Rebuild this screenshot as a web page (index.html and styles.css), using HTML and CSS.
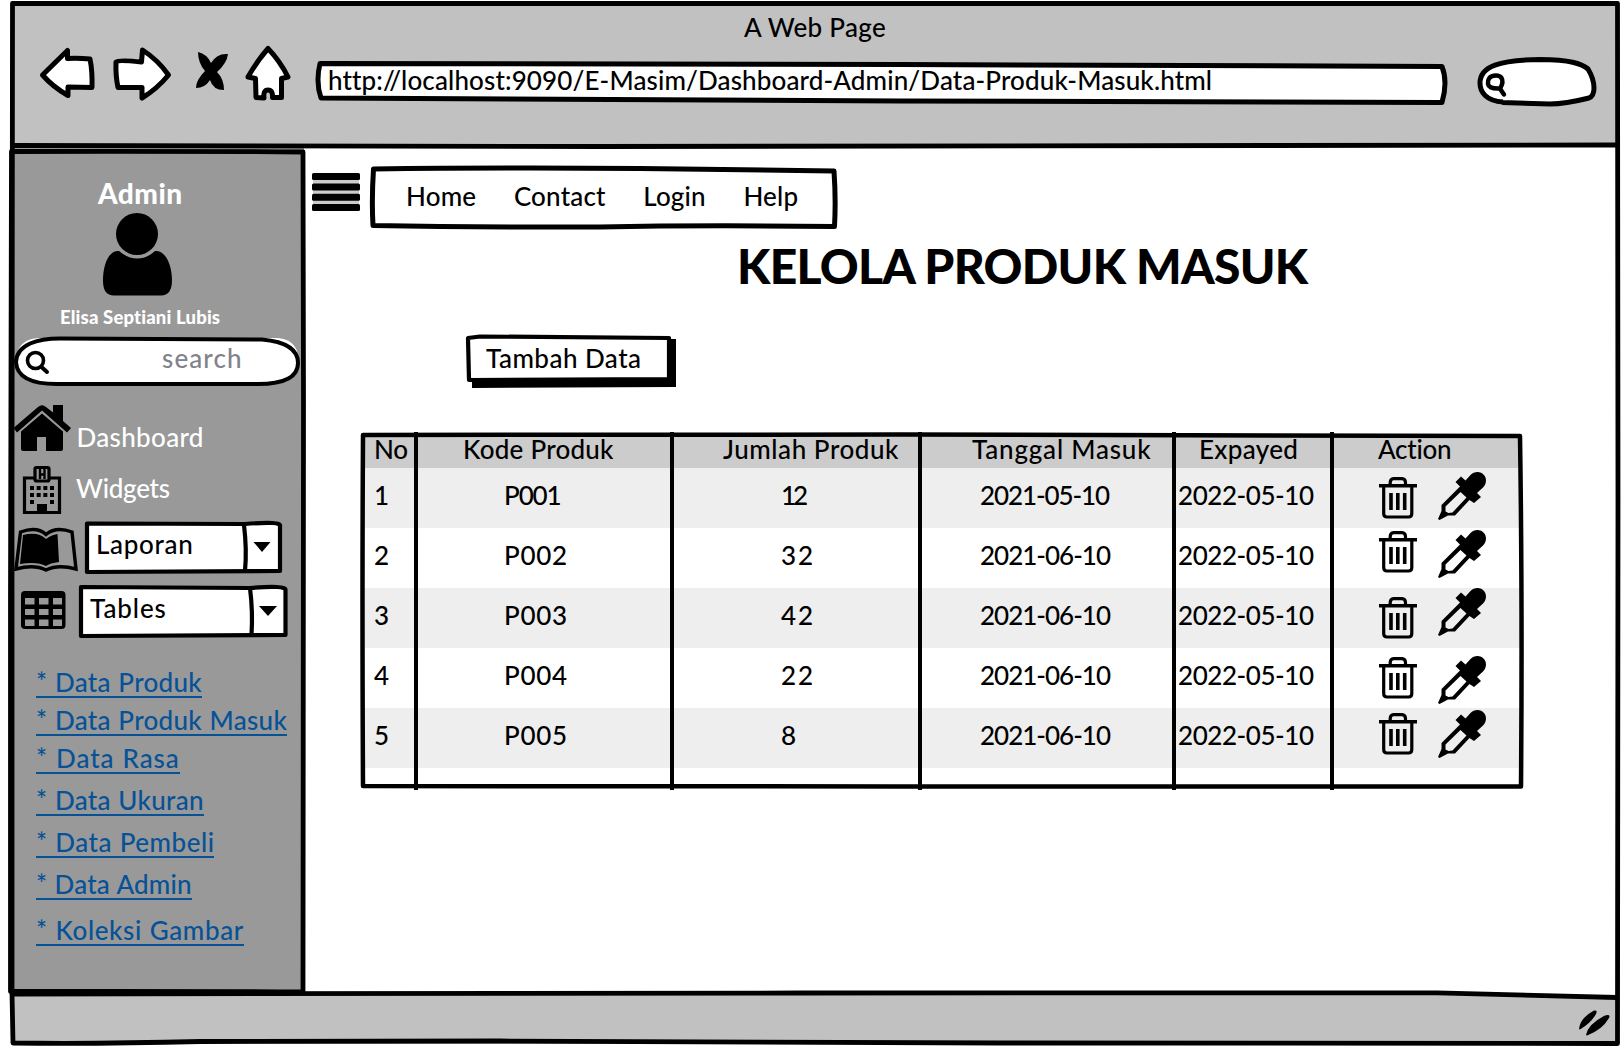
FILE: index.html
```html
<!DOCTYPE html>
<html lang="id">
<head>
<meta charset="utf-8">
<title>A Web Page</title>
<link rel="stylesheet" href="styles.css">
</head>
<body>
<svg class="symbols" aria-hidden="true">
  <symbol id="trash" viewBox="0 0 38 42">
    <path d="M0 8.800H38" stroke="#000" stroke-width="3.400" fill="none"/>
    <path d="M11.200 8V5.500Q11.500 1.800 14.500 1.700H23Q26.300 1.800 26.500 5.500V8" stroke="#000" stroke-width="3.200" fill="none"/>
    <path d="M4.700 9V36.500Q4.700 40 8 40H29.500Q32.800 40 32.800 36.500V9" stroke="#000" stroke-width="3.200" fill="none"/>
    <path d="M12 16V33M18.800 16V33M25.700 16V33" stroke="#000" stroke-width="3.600" fill="none"/>
  </symbol>
  <symbol id="dropper" viewBox="0 0 48 48">
    <path fill-rule="evenodd" d="M0 47L3.500 39V33L22 14.500L17.500 10L23 4.500L27.500 8.500L32.500 3C36-1 43-1 46 3C49 6.500 48.500 12 45 15.500L39 21L43 25L36 31L31.500 28L17 43.500H10L1.500 48ZM7.500 34.500V39.500L10.500 41L14.500 40.500L28.500 25.500L22.500 20Z"/>
  </symbol>
</svg>
<div class="window">
  <header class="chrome">
    <div class="title">A Web Page</div>
    <div class="toolbar">
      <svg class="tools" width="260" height="64" viewBox="36 40 260 64">
        <g fill="#fff" stroke="#000" stroke-width="5" stroke-linejoin="round">
          <path d="M42.500 75L67.500 50.500V58.500Q79 58 90 59Q92.500 71 92 87.500L68 87V95.500Q53 87 42.500 75Z"/>
          <path d="M116 62Q118 59.500 141.500 62L142.500 50Q158 60 168.500 75Q157 89 142 98V87.500L118 87.500Q115.500 76 116 62Z"/>
          <path d="M268 48.500Q280 61 288 77L281.500 78.500L281.500 97.500H272.500Q273 90 268 90Q263 90 264 98L256 97.500L255.500 78.500L248 77Q257 61 268 48.500Z"/>
        </g>
        <path d="M198 52Q207 54 211 63Q217 53 228 54Q227 63 217 72Q224 79 224 90Q213 90 210 80Q205 88 196 88Q196 80 205 71Q198 63 198 52Z"/>
      </svg>
      <div class="address">
        <svg class="outline" width="1136" height="48" viewBox="314 59 1136 48"><path class="box" d="M320 63.500L900 64.500L1442 66.500Q1448 82 1442 102.500L900 101L321 98Q315.500 82 320 63.500Z"/></svg>
        <span>http://localhost:9090/E-Masim/Dashboard-Admin/Data-Produk-Masuk.html</span>
      </div>
      <svg class="find" width="122" height="54" viewBox="1476 56 122 54">
        <path class="box" d="M1503 102C1486 101 1480 92 1480 83C1480 66 1500 60 1540 59.500C1570 60 1581 63 1588 69Q1594 79 1594 88Q1594 96 1589 98Q1565 104 1550 104L1502 102.500"/>
        <path d="M1496 75.500C1489 75.500 1487.500 80 1488 84Q1489 89 1500 88.500Q1504 82 1501.500 78Q1500 75.500 1496 75.500ZM1499.500 88L1504 94.500" fill="none" stroke="#000" stroke-width="4.500" stroke-linecap="round"/>
      </svg>
    </div>
  </header>

  <div class="body">
    <aside class="sidebar">
      <div class="role">Admin</div>
      <svg class="person" width="70" height="84" viewBox="102 212 70 84"><circle cx="137" cy="234" r="21"/><path d="M119 251Q128 258.500 137 258.500Q147 258.500 155 251C166 250 172 266 172 280Q172 295.500 161 295.500H114Q103 295.500 103 281C103 264 109 250 119 251Z"/></svg>
      <div class="user">Elisa Septiani Lubis</div>
      <div class="search">
        <svg class="outline" width="290" height="54" viewBox="12 334 290 54">
          <path fill="#fff" d="M18 350Q24 338 40 338H275Q294 338 298 354V370H18Z"/>
          <path d="M16 362C17 344 38 338.500 60 338.500L262 339.500C290 342 298 352 298 363C298 378 283 384 258 384L60 384C36 384.500 17 380 16 362Z" fill="#fff" stroke="#000" stroke-width="4"/>
          <circle cx="35.500" cy="360.500" r="8" fill="none" stroke="#000" stroke-width="3.600"/><path d="M41.500 367L47 372" stroke="#000" stroke-width="4" stroke-linecap="round"/>
        </svg>
        <span>search</span>
      </div>
      <nav class="menu">
        <div class="item dash">
          <svg width="58" height="48" viewBox="13 404 58 48"><path d="M13.500 428L38 407Q42 403.500 46 407L53 412.500V405H63V421L71 428L67 432.500L42 410.500L17 432.500Z"/><path d="M42 413.500L63 431.500V449Q63 451 61 451H46V437H37V451H23Q21 451 21 449V431.500Z"/></svg>
          <span>Dashboard</span>
        </div>
        <div class="item widg">
          <svg width="40" height="50" viewBox="22 465 40 50"><path d="M34 478H24.500V512.500H59.500V478H50" fill="none" stroke="#000" stroke-width="3.200"/><rect x="35" y="467.500" width="14" height="13.500" rx="1.500" fill="#999" stroke="#000" stroke-width="3.200"/><path d="M40 469V479M44.500 469V479M40 474.500H45" stroke="#000" stroke-width="2.400"/><path d="M30 488H54M30 495H54" stroke="#000" stroke-width="4" stroke-dasharray="4 2.670"/><path d="M30 502H34M50 502H54" stroke="#000" stroke-width="4"/><path d="M37 504H47V513H37Z"/></svg>
          <span>Widgets</span>
        </div>
        <div class="item lap">
          <svg width="66" height="46" viewBox="13 527 66 46"><path d="M20.500 532Q37 526 46 534.500Q56 526 72 532L76 569Q58 564 46 570Q34 564 16 569Z" fill="none" stroke="#000" stroke-width="3.400"/><path d="M23 535Q38 531 46 539Q51 535 57.500 534L59 562Q50 563 46 566Q37 561 20 564Z"/></svg>
          <div class="select">
            <svg class="outline" width="200" height="56" viewBox="83 519 200 56"><path class="box thin" d="M87 523.500L245 524Q282 521 280 526V571L87 572Z"/><path class="box thin" d="M244 525Q247 550 245 571"/><path d="M253.500 542H270.500L262 552Z"/></svg>
            <span>Laporan</span>
          </div>
        </div>
        <div class="item tab">
          <svg width="46" height="40" viewBox="20 590 46 40"><rect x="21" y="591" width="44.500" height="38" rx="4"/><path fill="#999" d="M25 598H34.500V604.500H25ZM39 598H48.500V604.500H39ZM53 598H62V604.500H53ZM25 609H34.500V615H25ZM39 609H48.500V615H39ZM53 609H62V615H53ZM25 619.500H34.500V626H25ZM39 619.500H48.500V626H39ZM53 619.500H62V626H53Z"/></svg>
          <div class="select">
            <svg class="outline" width="212" height="58" viewBox="77 583 212 58"><path class="box thin" d="M81 587L250 588Q286 585 285.500 590V635L81 636Z"/><path class="box thin" d="M250 588Q253 612 251.500 635"/><path d="M259 606H277L268 616Z"/></svg>
            <span>Tables</span>
          </div>
        </div>
      </nav>
      <ul class="links">
        <li><a>* Data Produk</a></li>
        <li><a>* Data Produk Masuk</a></li>
        <li><a>* Data Rasa</a></li>
        <li><a>* Data Ukuran</a></li>
        <li><a>* Data Pembeli</a></li>
        <li><a>* Data Admin</a></li>
        <li><a>* Koleksi Gambar</a></li>
      </ul>
    </aside>

    <main class="content">
      <div class="topbar">
        <svg class="burger" width="48" height="38" viewBox="0 0 48 38"><path fill="#ccc" d="M1 2H47V36H1Z"/><g><rect width="48" height="7" rx="1.500"/><rect y="10.500" width="48" height="7" rx="1.500"/><rect y="20.800" width="48" height="7" rx="1.500"/><rect y="31" width="48" height="7" rx="1.500"/></g></svg>
        <nav class="tabs">
          <svg class="outline" width="470" height="66" viewBox="369 164 470 66"><path class="box" d="M373.500 169Q500 167.500 640 168.500L834 171Q836 200 834.500 226.500Q700 225 600 227Q480 227.500 373 225.500Q371.500 200 373.500 169Z"/></svg>
          <a>Home</a><a>Contact</a><a>Login</a><a>Help</a>
        </nav>
      </div>
      <h1>KELOLA PRODUK MASUK</h1>
      <button class="add" type="button">
        <svg class="outline" width="212" height="56" viewBox="465 333 212 56"><path d="M472 338L676 339V387L472 388Z"/><path class="box thin" d="M468 338L480 336.500L669 338V379L469 380Z"/></svg>
        <span>Tambah Data</span>
      </button>
      <div class="tablebox">
        <svg class="outline over" width="1168" height="362" viewBox="358 430 1168 362"><g fill="none" stroke="#000"><path stroke-width="4.500" stroke-linejoin="round" d="M363 435L900 434.500L1520 436Q1522.500 600 1521 786.500L900 786.500L363 786Q362 600 363 435Z"/><path stroke-width="4" d="M416 432V790M672 432V790M920 432V790M1174 432V790M1332 432V790"/></g></svg>
        <table>
          <colgroup><col class="c1"><col class="c2"><col class="c3"><col class="c4"><col class="c5"><col class="c6"></colgroup>
          <thead><tr><th>No</th><th>Kode Produk</th><th>Jumlah Produk</th><th>Tanggal Masuk</th><th>Expayed</th><th>Action</th></tr></thead>
          <tbody>
            <tr><td>1</td><td>P001</td><td>12</td><td>2021-05-10</td><td>2022-05-10</td><td class="actions"><svg><use href="#trash"/></svg><svg><use href="#dropper"/></svg></td></tr>
            <tr><td>2</td><td>P002</td><td>32</td><td>2021-06-10</td><td>2022-05-10</td><td class="actions"><svg><use href="#trash"/></svg><svg><use href="#dropper"/></svg></td></tr>
            <tr><td>3</td><td>P003</td><td>42</td><td>2021-06-10</td><td>2022-05-10</td><td class="actions"><svg><use href="#trash"/></svg><svg><use href="#dropper"/></svg></td></tr>
            <tr><td>4</td><td>P004</td><td>22</td><td>2021-06-10</td><td>2022-05-10</td><td class="actions"><svg><use href="#trash"/></svg><svg><use href="#dropper"/></svg></td></tr>
            <tr><td>5</td><td>P005</td><td>8</td><td>2021-06-10</td><td>2022-05-10</td><td class="actions"><svg><use href="#trash"/></svg><svg><use href="#dropper"/></svg></td></tr>
          </tbody>
        </table>
      </div>
    </main>
  </div>
  <footer class="status">
    <svg width="36" height="30" viewBox="1577 1009 36 30"><path d="M1579 1029Q1580 1018 1594 1010.500Q1598 1010 1596 1014Q1591 1023 1580 1029.500ZM1586 1035Q1588 1024 1605 1015.500Q1611 1014 1609 1018Q1602 1030 1587 1035.500Z"/></svg>
  </footer>
  <svg class="frame" width="1622" height="1048" viewBox="0 0 1622 1048">
    <path fill="#fff" d="M1400 985H1616V996L1437 991L1400 990Z"/>
    <g fill="none" stroke="#000" stroke-width="4.800" stroke-linejoin="round">
      <path d="M12.500 3.500L1617.500 3.500L1618 500L1617.500 1043.500L1000 1043L500 1041L200 1041.500Q100 1044 13 1043L12 993L12 500Z"/>
      <path d="M12 145.500L600 146.500L1617 145"/>
      <path d="M11.500 151.500Q160 151 303 152Q303.500 300 303.500 400L303 992Q160 991 10.500 991.500L10.500 600Z"/>
      <path d="M13 994L800 993L1437 992.800L1617 997.500"/>
    </g>
  </svg>
</div>
</body>
</html>
```
FILE: styles.css
```css
* { box-sizing: border-box; }
body { margin: 0; background: #fff; color: #000; font: 500 26px/32px Lato, "Open Sans", sans-serif; }
svg { display: block; flex: none; }
.symbols { position: absolute; width: 0; height: 0; }
.window { position: relative; display: grid; grid-template-rows: 143px 847px 51px; width: 1622px; height: 1048px; padding: 3px 4px 4px 12px; overflow: hidden; white-space: nowrap; }

/* Hand-drawn outlines sit behind or over the element they frame */
.frame { position: absolute; left: 0; top: 0; }
.outline { position: absolute; left: 0; top: 0; z-index: -1; }
.over { z-index: 1; }
.box { fill: #fff; stroke: #000; stroke-width: 5; stroke-linejoin: round; }
.thin { stroke-width: 4.2px; }

.chrome { background: #c1c1c1; padding-top: 8px; }
.title { text-align: center; height: 29px; letter-spacing: .3px; }
.toolbar { display: flex; padding-left: 24px; }
.address { position: relative; z-index: 0; width: 1136px; height: 48px; margin: 19px 0 0 18px; padding: 5px 0 0 14px; letter-spacing: .13px; }
.find { margin: 16px 0 0 26px; }

.body { display: flex; }
.sidebar { width: 292px; background: #999; color: #fff; padding-top: 31px; }
.role { font-size: 28px; font-weight: 900; padding-left: 86px; height: 35px; letter-spacing: .5px; }
.person { margin-left: 90px; }
.user { font-size: 18.5px; font-weight: 900; padding: 5px 0 0 48px; height: 38px; letter-spacing: .16px; }
.search { position: relative; z-index: 0; width: 290px; height: 54px; padding: 8px 0 0 150px; color: #82828c; letter-spacing: 1.1px; }
.item { display: flex; }
.dash { margin-top: 16px; padding-left: 1px; gap: 5.5px; height: 61px; letter-spacing: .33px; }
.dash span { margin-top: 17px; }
.widg { padding-left: 10px; gap: 14px; height: 54px; letter-spacing: -.27px; }
.widg span { margin-top: 7px; }
.lap { padding-left: 1px; gap: 4px; height: 64px; letter-spacing: .68px; }
.lap > svg { margin-top: 8px; }
.select { position: relative; z-index: 0; color: #000; width: 200px; height: 56px; padding: 9px 0 0 13px; }
.tab { padding-left: 8px; gap: 11px; height: 72px; letter-spacing: .9px; }
.tab > svg { margin-top: 7px; }
.tab .select { width: 212px; height: 58px; }
.links { list-style: none; margin: 0; padding: 11px 0 0 24px; color: #075297; letter-spacing: .3px; word-spacing: .7px; }
.links li { height: 38px; }
.links li:nth-child(n+3) { height: 42px; }
.links li:nth-child(3) { letter-spacing: .9px; }
.links li:nth-child(5) { letter-spacing: .5px; }
.links li:nth-child(6) { height: 46px; letter-spacing: .15px; }
.links li:nth-child(7) { letter-spacing: .6px; }
.links a { display: inline-block; height: 32px; border-bottom: 2px solid; }

.content { padding: 18px 0 0 6px; }
.topbar { display: flex; padding-left: 2px; }
.burger { margin-top: 9px; }
.tabs { position: relative; z-index: 0; display: flex; gap: 37.6px; width: 470px; height: 66px; margin-left: 9px; padding: 16px 0 0 37px; letter-spacing: .18px; }
h1 { margin: 7px 0 0 427px; font-size: 48px; line-height: 58px; font-weight: 900; letter-spacing: -.72px; }
.add { position: relative; z-index: 0; display: flex; align-items: flex-start; width: 212px; height: 56px; margin: 38px 0 0 155px; padding: 9px 0 0 21px; border: 0; background: none; font: inherit; color: inherit; letter-spacing: .47px; }
.tablebox { position: relative; z-index: 0; width: 1168px; height: 362px; margin: 41px 0 0 48px; padding: 4px 0 0 5px; }
table { width: 1158px; border-collapse: collapse; table-layout: fixed; }
.c1 { width: 53px; } .c2 { width: 256px; } .c3 { width: 248px; } .c4 { width: 254px; } .c5 { width: 158px; } .c6 { width: 189px; }
th, td { padding: 0; text-align: left; vertical-align: top; font-weight: 500; }
thead tr { height: 34px; background: #ccc; }
th { line-height: 31px; }
tbody tr { height: 60px; }
tbody tr:nth-child(odd) { background: #eee; }
td { padding-top: 11px; height: 60px; }
th:nth-child(1), td:nth-child(1) { padding-left: 11px; }
th:nth-child(1) { letter-spacing: -.3px; }
th:nth-child(2) { padding-left: 47px; letter-spacing: .25px; }
th:nth-child(3) { padding-left: 51px; letter-spacing: .55px; }
th:nth-child(4) { padding-left: 52px; letter-spacing: .8px; }
th:nth-child(5) { padding-left: 25px; letter-spacing: .35px; }
th:nth-child(6) { padding-left: 46px; letter-spacing: -.27px; }
td:nth-child(2) { padding-left: 88px; letter-spacing: .67px; }
td:nth-child(3) { padding-left: 109px; letter-spacing: 1.8px; }
td:nth-child(4) { padding-left: 60px; letter-spacing: -1px; }
td:nth-child(5) { padding-left: 4px; letter-spacing: -.44px; }
tr:first-child td:nth-child(2) { letter-spacing: -1.1px; }
tr:first-child td:nth-child(3) { letter-spacing: -3px; }
tr:first-child td:nth-child(4) { letter-spacing: -1.1px; }

.actions { display: flex; gap: 21px; }
td.actions { padding: 0 0 0 47px; }
.actions svg:first-child { width: 38px; height: 42px; margin-top: 9px; }
.actions svg:last-child { width: 48px; height: 48px; margin-top: 4px; }
tr:nth-child(2) .actions svg:first-child { margin-top: 3px; }
tr:nth-child(2) .actions svg:last-child { margin-top: 2px; }
tr:nth-child(3) .actions svg:last-child { margin-top: 0; }
tr:nth-child(4) .actions svg:last-child { margin-top: 8px; }
tr:nth-child(5) .actions svg:first-child { margin-top: 5px; }
tr:nth-child(5) .actions svg:last-child { margin-top: 2px; }

.status { display: flex; justify-content: flex-end; background: #c1c1c1; padding: 16px 5px 0 0; }
```
